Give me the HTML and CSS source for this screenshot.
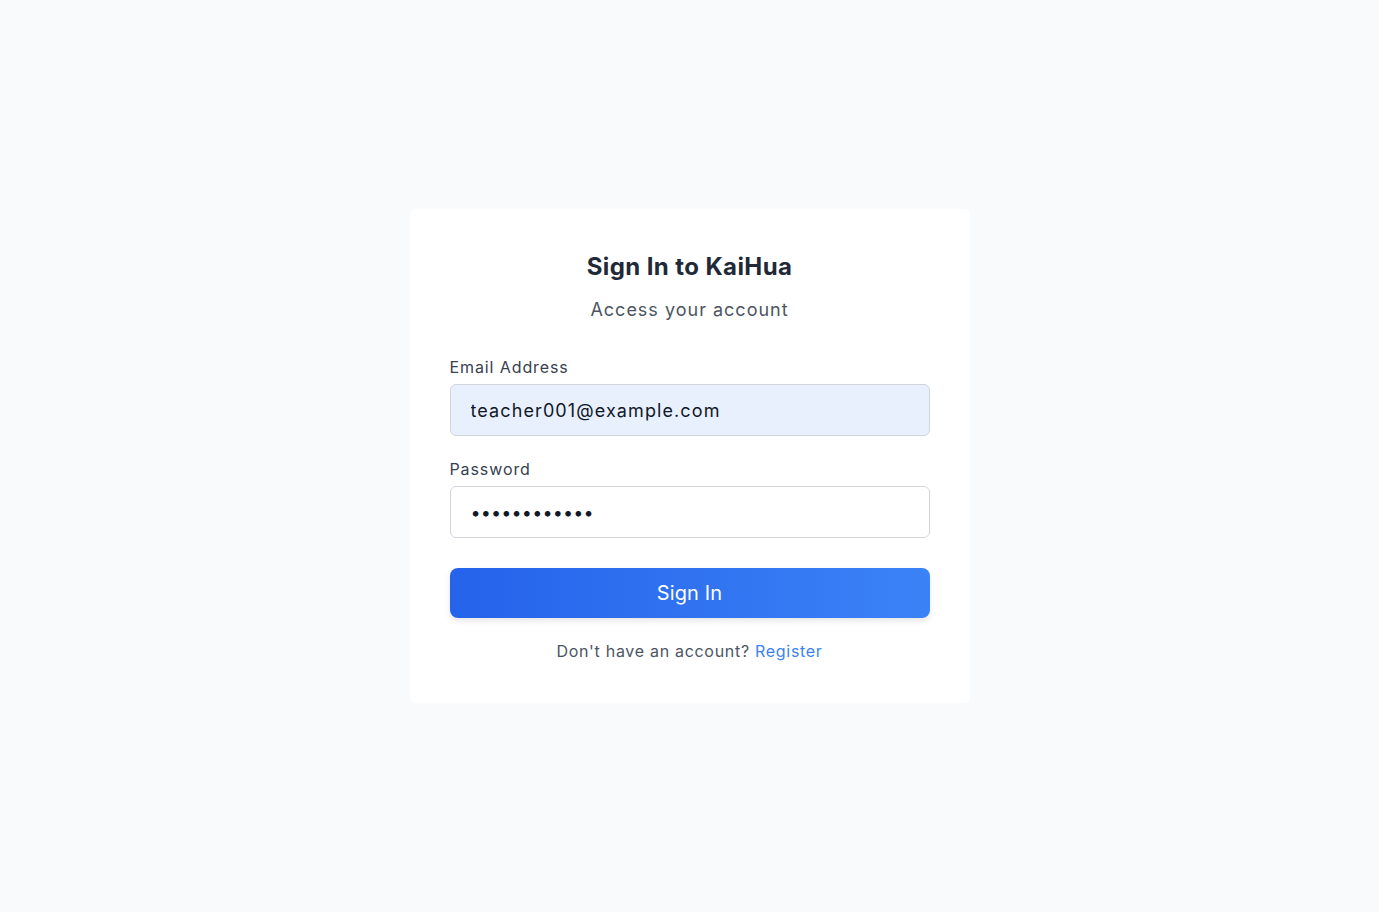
FILE: index.html
```html
<!DOCTYPE html>
<html lang="en">
<head>
    <meta charset="UTF-8">
    <meta name="viewport" content="width=device-width, initial-scale=1.0">
    <title>Sign In - KaiHua</title>
    <link rel="stylesheet" href="styles.css">
</head>
<body>

<div class="page">
    <form class="login-card" onsubmit="return false">
        <h1 class="login-title">Sign In to KaiHua</h1>
        <p class="login-subtitle">Access your account</p>

        <div class="form-group">
            <label for="email">Email Address</label>
            <input type="email" id="email" class="form-input filled" value="teacher001@example.com">
        </div>

        <div class="form-group last">
            <label for="password">Password</label>
            <input type="password" id="password" class="form-input" value="password1234">
        </div>

        <button type="submit" class="btn-submit">Sign In</button>

        <p class="login-footer">Don't have an account? <a href="#">Register</a></p>
    </form>
</div>

</body>
</html>
```

FILE: styles.css
```css
* {
    box-sizing: border-box;
}
body {
    margin: 0;
    background: #f9fafb;
    font-family: Inter, "Noto Sans", sans-serif;
    color: #1f2937;
}
.page {
    min-height: 100vh;
    display: flex;
    align-items: center;
    justify-content: center;
}
.login-card {
    width: 560px;
    padding: 40px;
    background: #fff;
    border-radius: 6px;
}
.login-title {
    margin: 0 0 11px;
    font-size: 24px;
    line-height: 36px;
    font-weight: 700;
    letter-spacing: 0.4px;
    text-align: center;
    color: #1f2937;
}
.login-subtitle {
    margin: 0 0 31px;
    font-size: 18px;
    line-height: 28px;
    letter-spacing: 1px;
    text-align: center;
    color: #4b5563;
}
.form-group {
    margin-bottom: 21px;
}
.form-group.last {
    margin-bottom: 30px;
}
.form-group label {
    display: block;
    margin-bottom: 5px;
    font-size: 16px;
    line-height: 24px;
    letter-spacing: 0.9px;
    color: #374151;
}
.form-input {
    display: block;
    width: 100%;
    height: 52px;
    padding: 0 20px;
    border: 1px solid #d1d5db;
    border-radius: 6px;
    background: #fff;
    font-family: inherit;
    font-size: 18px;
    letter-spacing: 1.1px;
    color: #111827;
    outline: none;
}
.form-input.filled {
    background: #e8f0fe;
}
.form-input[type="password"] {
    letter-spacing: 0.15px;
}
.btn-submit {
    display: block;
    width: 100%;
    height: 50px;
    border: none;
    border-radius: 8px;
    background: linear-gradient(90deg, #2563eb, #3b82f6);
    box-shadow: 0 3px 6px rgba(0, 0, 0, 0.1);
    color: #fff;
    font-family: inherit;
    font-size: 20px;
    letter-spacing: 0.1px;
    cursor: pointer;
}
.login-footer {
    margin: 21px 0 0;
    font-size: 16px;
    line-height: 24px;
    letter-spacing: 0.7px;
    text-align: center;
    color: #4b5563;
}
.login-footer a {
    color: #3b82f6;
    text-decoration: none;
}
```
